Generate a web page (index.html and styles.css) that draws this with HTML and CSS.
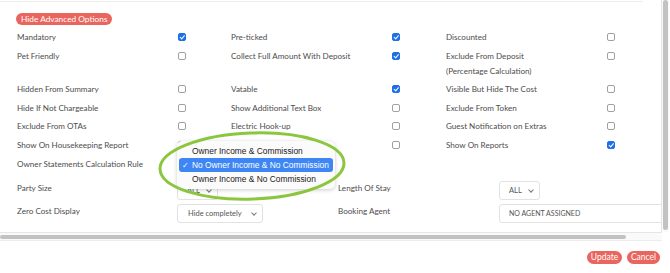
FILE: index.html
```html
<!DOCTYPE html>
<html>
<head>
  <meta charset="UTF-8">
  <title>Extra Options</title>
  <link rel="stylesheet" href="styles.css">
</head>
<body>
  <div class="frame">
    <div class="body-row">
      <div class="view">
        <div class="inner">
          <div class="rule"></div>
          <button class="pill toggle">Hide Advanced Options</button>

          <div class="opts">
            <div class="lbl">Mandatory</div><div><span class="cb on"></span></div>
            <div class="lbl">Pre-ticked</div><div><span class="cb on"></span></div>
            <div class="lbl">Discounted</div><div><span class="cb"></span></div>

            <div class="lbl">Pet Friendly</div><div><span class="cb"></span></div>
            <div class="lbl">Collect Full Amount With Deposit</div><div><span class="cb on"></span></div>
            <div class="lbl">Exclude From Deposit<br>(Percentage Calculation)</div><div><span class="cb"></span></div>

            <div class="lbl">Hidden From Summary</div><div><span class="cb"></span></div>
            <div class="lbl">Vatable</div><div><span class="cb on"></span></div>
            <div class="lbl">Visible But Hide The Cost</div><div><span class="cb"></span></div>

            <div class="lbl">Hide If Not Chargeable</div><div><span class="cb"></span></div>
            <div class="lbl">Show Additional Text Box</div><div><span class="cb"></span></div>
            <div class="lbl">Exclude From Token</div><div><span class="cb"></span></div>

            <div class="lbl">Exclude From OTAs</div><div><span class="cb"></span></div>
            <div class="lbl">Electric Hook-up</div><div><span class="cb"></span></div>
            <div class="lbl">Guest Notification on Extras</div><div><span class="cb"></span></div>

            <div class="lbl">Show On Housekeeping Report</div><div><span class="cb"></span></div>
            <div class="lbl"></div><div><span class="cb"></span></div>
            <div class="lbl">Show On Reports</div><div><span class="cb on"></span></div>
          </div>

          <div class="fields">
            <div class="lbl">Owner Statements Calculation Rule</div>
            <div><div class="sel wide"><span class="chev"></span></div></div>
            <div></div><div></div>

            <div class="lbl">Party Size</div>
            <div><div class="sel small">ALL <span class="chev"></span></div></div>
            <div class="lbl">Length Of Stay</div>
            <div><div class="sel small">ALL <span class="chev"></span></div></div>

            <div class="lbl">Zero Cost Display</div>
            <div><div class="sel mid">Hide completely <span class="chev"></span></div></div>
            <div class="lbl">Booking Agent</div>
            <div><div class="sel input">NO AGENT ASSIGNED</div></div>
          </div>
        </div>
      </div>
      <div class="vbar"><div class="thumb"></div></div>
    </div>
    <div class="hbar"><div class="thumb"></div></div>
  </div>

  <div class="actions">
    <button class="pill">Update</button>
    <button class="pill">Cancel</button>
  </div>

  <div class="menu">
    <div class="item">Owner Income &amp; Commission</div>
    <div class="item active"><span class="tick">✓</span>No Owner Income &amp; No Commission</div>
    <div class="item">Owner Income &amp; No Commission</div>
  </div>

  <svg class="ring" width="196" height="76" viewBox="0 0 196 76">
    <ellipse cx="96" cy="37" rx="92" ry="33" fill="none" stroke="#8cc63f" stroke-width="3" transform="rotate(-2 96 37)"/>
  </svg>
</body>
</html>
```

FILE: styles.css
```css
body {
  margin: 0;
  font-family: "Lato", "Noto Sans", sans-serif;
  color: #4d4d4d;
  background: #fff;
  position: relative;
  width: 670px;
  height: 273px;
  overflow: hidden;
}
.frame {
  width: 670px;
  height: 241px;
  display: flex;
  flex-direction: column;
}
.body-row {
  display: flex;
  height: 232px;
}
.view {
  width: 661px;
  overflow: hidden;
}
.vbar {
  width: 8px;
  border-left: 1px solid #e6e6e6;
  background: #fafafa;
  padding: 0 2px 0 1px;
  box-sizing: border-box;
}
.vbar .thumb {
  width: 5px;
  height: 230px;
  border-radius: 3px;
  background: #c2c2c2;
}
.hbar {
  height: 9px;
  box-sizing: border-box;
  border-top: 1px solid #e6e6e6;
  border-bottom: 1px solid #ededed;
  background: #fafafa;
  padding-top: 2px;
  width: 662px;
}
.hbar .thumb {
  width: 626px;
  height: 4px;
  border-radius: 3px;
  background: #c2c2c2;
}
.inner {
  width: 700px;
  padding-top: 1px;
}
.rule {
  width: 643px;
  height: 1px;
  background: #eeeeee;
}
.pill {
  border: none;
  border-radius: 7px;
  background: #e9655d;
  color: #fff;
  font-family: inherit;
  font-size: 8px;
  height: 13px;
  line-height: 13px;
  padding: 0 6px;
  white-space: nowrap;
  cursor: pointer;
}
.toggle {
  display: block;
  margin: 11px 0 0 16px;
  height: 12px;
  line-height: 12px;
  padding: 0 5px;
  font-size: 8.3px;
}
.opts {
  display: grid;
  grid-template-columns: 161px 53px 161px 54px 161px 30px;
  row-gap: 3.6px;
  padding: 5px 0 0 17px;
}
.lbl {
  font-size: 8.1px;
  line-height: 15px;
  white-space: nowrap;
}
.cb {
  display: block;
  width: 6px;
  height: 6px;
  margin-top: 3px;
  border: 1px solid #a0a0a0;
  border-radius: 2px;
  background: #fff;
  position: relative;
}
.cb.on {
  background: #1f6fe8;
  border-color: #1f6fe8;
}
.cb.on::after {
  content: "";
  position: absolute;
  left: 2px;
  top: 0;
  width: 1.5px;
  height: 3.5px;
  border: solid #fff;
  border-width: 0 1.3px 1.3px 0;
  transform: rotate(40deg);
}
.fields {
  display: grid;
  grid-template-columns: 160px 161px 161px 200px;
  row-gap: 4px;
  padding: 4px 0 0 17px;
  align-items: start;
}
.fields .lbl {
  line-height: 14px;
}
.sel {
  box-sizing: border-box;
  height: 19px;
  border: 1px solid #e2e2e2;
  border-radius: 3px;
  font-size: 7.5px;
  line-height: 17px;
  padding-left: 9px;
  color: #555;
  position: relative;
  white-space: nowrap;
  overflow: hidden;
}
.sel.small { width: 41px; }
.sel.mid { width: 86px; padding-left: 10px; }
.sel.wide { width: 158px; height: 20px; }
.sel.input { width: 200px; font-size: 7px; }
.chev {
  position: absolute;
  right: 6px;
  top: 6px;
  width: 3px;
  height: 3px;
  border: solid #777;
  border-width: 0 1px 1px 0;
  transform: rotate(45deg);
}
.actions {
  display: flex;
  justify-content: flex-end;
  gap: 5px;
  padding: 10px 10px 0 0;
}
.actions .pill {
  width: 35px;
  padding: 0;
  font-size: 8.5px;
}
.actions .pill:last-child {
  width: 33px;
}
.menu {
  position: absolute;
  left: 177px;
  top: 141px;
  width: 158px;
  height: 48px;
  box-sizing: border-box;
  padding: 3px 2px;
  background: #fbfbfb;
  border-radius: 5px;
  box-shadow: 0 1px 4px rgba(0, 0, 0, 0.2);
  font-family: "Liberation Sans", Arial, sans-serif;
  font-size: 8.4px;
  color: #222;
}
.item {
  height: 14px;
  line-height: 14px;
  padding-left: 13px;
  border-radius: 3px;
  position: relative;
}
.item.active {
  background: #3d86f4;
  color: #fff;
}
.tick {
  position: absolute;
  left: 3px;
}
.ring {
  position: absolute;
  left: 156px;
  top: 129px;
}
```
